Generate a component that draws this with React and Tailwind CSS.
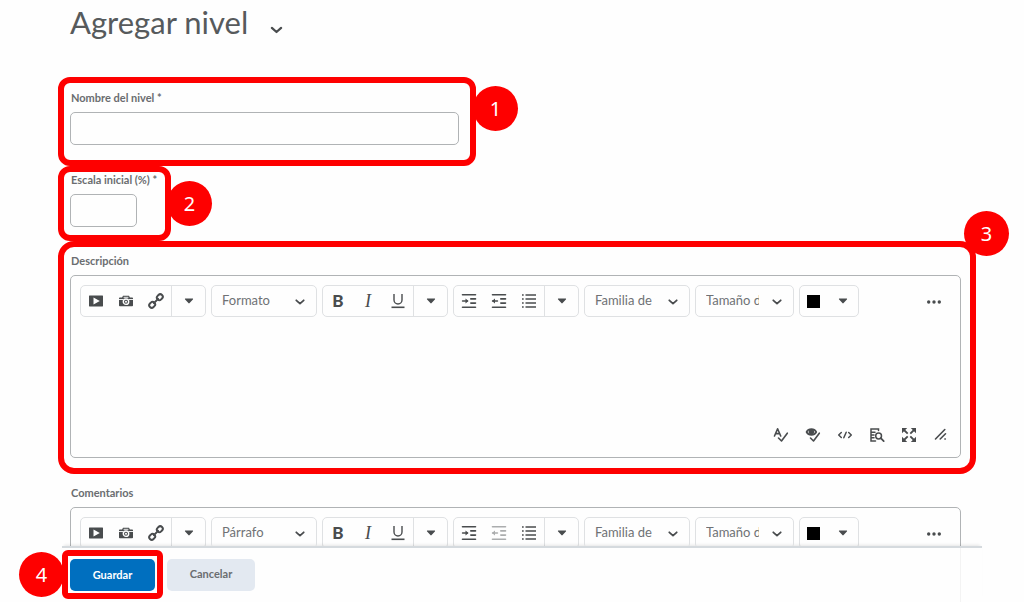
import React, { useState } from "react";

const CHROME = "border-[#dfe1e3]";

// --- Icons ---

function ChevronIcon({ className = "" }) {
  return (
    <svg className={className} width="12" height="8" viewBox="0 0 12 8" fill="none" stroke="currentColor" strokeWidth="1.8" strokeLinecap="round" strokeLinejoin="round" aria-hidden="true">
      <path d="M2.3 2.3L6 5.6l3.700-3.300" />
    </svg>
  );
}

function CaretIcon() {
  return (
    <svg width="10" height="6" viewBox="0 0 10 6" fill="currentColor" aria-hidden="true">
      <path d="M1.6 0.4h6.8c.7 0 .9.6.5 1L5.6 5.1c-.4.4-.8.4-1.2 0L1.1 1.4c-.4-.4-.2-1 .5-1z" />
    </svg>
  );
}

function VideoIcon() {
  return (
    <svg width="16" height="16" viewBox="0 0 16 16" fill="currentColor" aria-hidden="true">
      <path fillRule="evenodd" d="M1.500 2.5h13c.3 0 .5.2.5.5v10c0 .3-.2.5-.5.5h-13c-.3 0-.5-.2-.5-.5V3c0-.3.2-.5.5-.5zM5.500 4.600v6.800L11.800 8z" />
    </svg>
  );
}

function CameraIcon() {
  return (
    <svg width="16" height="16" viewBox="0 0 16 16" aria-hidden="true">
      <path fill="currentColor" d="M5 2.8h6l.9 1.700h2.300c.5 0 .8.300.8.800v7.200c0 .5-.3.800-.8.800H1.800c-.5 0-.8-.3-.8-.8V5.300c0-.5.3-.8.8-.8h2.300z" />
      <path d="M1 6.500h4M11 6.500h4" stroke="#fefefe" strokeWidth="0.900" />
      <path d="M5.600 4.300h4.800" stroke="#fefefe" strokeWidth="0.900" />
      <circle cx="8" cy="8.700" r="2.700" fill="none" stroke="#fefefe" strokeWidth="1.400" />
      <circle cx="8" cy="8.700" r="1" fill="#fefefe" />
    </svg>
  );
}

function LinkIcon() {
  return (
    <svg width="16" height="16" viewBox="0 0 16 16" fill="none" stroke="currentColor" strokeLinecap="round" aria-hidden="true">
      <g transform="rotate(-45 8 8)" strokeWidth="2">
        <rect x="-0.500" y="5.500" width="6.200" height="5" rx="2.500" />
        <rect x="10.300" y="5.500" width="6.200" height="5" rx="2.500" />
        <path d="M5 8h6" />
      </g>
    </svg>
  );
}

function UnderlineIcon() {
  return (
    <svg width="16" height="16" viewBox="0 0 16 16" fill="none" stroke="currentColor" aria-hidden="true">
      <path d="M4 1v6a4 4 0 0 0 8 0V1" strokeWidth="1.400" />
      <path d="M1.500 14.300h13" strokeWidth="1.600" />
    </svg>
  );
}

function IndentIcon({ outdent = false }) {
  return (
    <svg width="16" height="16" viewBox="0 0 16 16" fill="none" stroke="currentColor" strokeWidth="1.600" strokeLinecap="round" aria-hidden="true">
      <path d="M1.500 1.800h13M1.500 14.200h13M9.800 5.900h4.700M9.800 10.100h4.700" />
      <path d="M1.500 8h5" strokeWidth="1.400" />
      <path d={outdent ? "M1 8l3-2.400v4.800z" : "M7.500 8l-3-2.400v4.800z"} fill="currentColor" stroke="none" />
    </svg>
  );
}

function ListIcon() {
  return (
    <svg width="16" height="16" viewBox="0 0 16 16" fill="none" stroke="currentColor" strokeWidth="1.500" aria-hidden="true">
      <path d="M4.500 2h10.500M4.500 6h10.500M4.500 10h10.500M4.500 14h10.500" />
      <path d="M1 2h1.700M1 6h1.700M1 10h1.700M1 14h1.700" />
    </svg>
  );
}

function MoreIcon() {
  return (
    <svg width="16" height="16" viewBox="0 0 16 16" fill="currentColor" aria-hidden="true">
      <circle cx="2.700" cy="9" r="1.700" />
      <circle cx="8" cy="9" r="1.700" />
      <circle cx="13.300" cy="9" r="1.700" />
    </svg>
  );
}

function SpellcheckIcon() {
  return (
    <svg width="16" height="16" viewBox="0 0 16 16" fill="none" stroke="currentColor" strokeWidth="1.600" strokeLinecap="round" strokeLinejoin="round" aria-hidden="true">
      <path d="M1.500 9L4.600 1.800L7.700 9M2.700 6.600h3.800" />
      <path d="M5.500 11l3 3L14.300 6.200" />
    </svg>
  );
}

function AccessibilityCheckIcon() {
  return (
    <svg width="16" height="16" viewBox="0 0 16 16" fill="none" stroke="currentColor" strokeWidth="1.600" strokeLinecap="round" strokeLinejoin="round" aria-hidden="true">
      <path d="M1.500 5C3.600 1.200 9.200 1.200 11.300 5C9.200 8.800 3.600 8.800 1.500 5z" />
      <circle cx="6.400" cy="4.800" r="2" fill="currentColor" />
      <path d="M5.500 11l3 3L14.300 6.200" />
    </svg>
  );
}

function SourceIcon() {
  return (
    <svg width="16" height="16" viewBox="0 0 16 16" fill="none" stroke="currentColor" strokeWidth="1.500" strokeLinecap="round" strokeLinejoin="round" aria-hidden="true">
      <path d="M4.300 5.500L1.700 8l2.600 2.500M11.700 5.500L14.300 8l-2.600 2.500M9.200 5.300L6.800 10.700" />
    </svg>
  );
}

function PreviewIcon() {
  return (
    <svg width="16" height="16" viewBox="0 0 16 16" fill="none" stroke="currentColor" strokeWidth="1.500" strokeLinecap="round" aria-hidden="true">
      <path d="M9.500 3.500V2H2v12h4.500M2 5.300h4M2 8h3M2 10.800h3" />
      <circle cx="9.600" cy="9" r="2.900" />
      <path d="M11.800 11.200l2.900 2.900" strokeWidth="1.800" />
    </svg>
  );
}

function FullscreenIcon() {
  return (
    <svg width="16" height="16" viewBox="0 0 16 16" fill="currentColor" stroke="currentColor" aria-hidden="true">
      <path stroke="none" d="M1 1h5.200L1 6.200zM15 1v5.200L9.800 1zM1 15V9.800L6.200 15zM15 15H9.800L15 9.800z" />
      <path d="M3 3l3.700 3.700M13 3L9.300 6.700M3 13l3.700-3.700M13 13L9.300 9.300" strokeWidth="1.800" />
    </svg>
  );
}

function ResizeIcon() {
  return (
    <svg width="16" height="16" viewBox="0 0 16 16" fill="none" stroke="currentColor" strokeWidth="1.600" strokeLinecap="round" aria-hidden="true">
      <path d="M2.500 12L11.800 2.500M7.200 12L12.500 6.800M11.900 12h.4" />
    </svg>
  );
}

// --- Callouts ---

function Badge({ number, className }) {
  return (
    <span className={`absolute flex h-[45px] w-[45px] items-center justify-center rounded-full bg-[#fe0000] font-['Noto_Sans',sans-serif] text-xl text-white ${className}`}>
      {number}
    </span>
  );
}

function Callout({ number, badgeClass, className, children }) {
  return (
    <div className={`relative border-[6px] border-[#fe0000] ${className}`}>
      {children}
      <Badge number={number} className={badgeClass} />
    </div>
  );
}

// --- Form parts ---

function Label({ htmlFor, children }) {
  return (
    <label htmlFor={htmlFor} className="mb-1.5 block pl-px text-[11px] leading-4 font-bold text-[#6a6d70]">
      {children}
    </label>
  );
}

function TextField({ id, className }) {
  return (
    <input
      id={id}
      type="text"
      required
      className={`block h-[33px] rounded-[5px] border border-[#b0b3b5] px-3 text-sm ${className}`}
    />
  );
}

function ToolButton({ label, disabled, className = "w-[30px]", children }) {
  return (
    <button
      type="button"
      aria-label={label}
      disabled={disabled}
      className={`flex h-full items-center justify-center disabled:opacity-45 ${className}`}
    >
      {children}
    </button>
  );
}

function ToolGroup({ more, children }) {
  return (
    <div className={`flex h-8 shrink-0 rounded-[5px] border ${CHROME}`}>
      {children}
      <ToolButton label={more} className={`w-[34px] border-l ${CHROME}`}>
        <CaretIcon />
      </ToolButton>
    </div>
  );
}

function ToolSelect({ label, value, className }) {
  return (
    <div className={`relative h-8 shrink-0 ${className}`}>
      <select
        aria-label={label}
        className={`h-full w-full appearance-none rounded-[5px] border ${CHROME} pr-[34px] pl-2.5 text-[13px] text-[#6f7275]`}
      >
        <option>{value}</option>
      </select>
      <ChevronIcon className="pointer-events-none absolute top-[13px] right-[11px]" />
    </div>
  );
}

function Editor({ id, format, outdentDisabled }) {
  const [text, setText] = useState("");

  return (
    <div className="rounded-[5px] border border-[#b0b3b5] text-[#494c4e]">
      <div className="flex gap-[5px] px-[9px] pt-[9px]">
        <ToolGroup more="Más opciones de inserción">
          <ToolButton label="Insertar video"><VideoIcon /></ToolButton>
          <ToolButton label="Insertar imagen"><CameraIcon /></ToolButton>
          <ToolButton label="Insertar enlace"><LinkIcon /></ToolButton>
        </ToolGroup>
        <ToolSelect label="Formato" value={format} className="w-[106px]" />
        <ToolGroup more="Más opciones de texto">
          <ToolButton label="Negrita">
            <span className="text-[17px] font-black">B</span>
          </ToolButton>
          <ToolButton label="Cursiva">
            <span className="font-['Liberation_Serif',serif] text-lg italic">I</span>
          </ToolButton>
          <ToolButton label="Subrayado"><UnderlineIcon /></ToolButton>
        </ToolGroup>
        <ToolGroup more="Más opciones de lista">
          <ToolButton label="Aumentar sangría"><IndentIcon /></ToolButton>
          <ToolButton label="Reducir sangría" disabled={outdentDisabled}><IndentIcon outdent /></ToolButton>
          <ToolButton label="Lista"><ListIcon /></ToolButton>
        </ToolGroup>
        <ToolSelect label="Familia de fuente" value="Familia de fuente" className="w-[106px]" />
        <ToolSelect label="Tamaño de fuente" value="Tamaño de fuente" className="w-[99px]" />
        <button
          type="button"
          aria-label="Color de texto"
          className={`flex h-8 w-[60px] shrink-0 items-center justify-between rounded-[5px] border ${CHROME} pr-2.5 pl-[7px]`}
        >
          <span className="h-[13px] w-[13px] bg-black" />
          <CaretIcon />
        </button>
        <div className="ml-auto h-8 pr-px">
          <ToolButton label="Más acciones" className="w-8"><MoreIcon /></ToolButton>
        </div>
      </div>

      <textarea
        id={id}
        value={text}
        onChange={(e) => setText(e.target.value)}
        className="block h-[102px] w-full resize-none px-4 py-2 text-sm outline-none"
      />

      <div className="mb-1.5 flex h-8 justify-end pr-[3px]">
        <ToolButton label="Revisar ortografía" className="w-8"><SpellcheckIcon /></ToolButton>
        <ToolButton label="Comprobar accesibilidad" className="w-8"><AccessibilityCheckIcon /></ToolButton>
        <ToolButton label="Código fuente" className="w-8"><SourceIcon /></ToolButton>
        <ToolButton label="Vista previa" className="w-8"><PreviewIcon /></ToolButton>
        <ToolButton label="Pantalla completa" className="w-8"><FullscreenIcon /></ToolButton>
        <ToolButton label="Cambiar tamaño" className="w-8"><ResizeIcon /></ToolButton>
      </div>
    </div>
  );
}

export default function App() {
  return (
    <form
      onSubmit={(e) => e.preventDefault()}
      className="flex h-screen flex-col bg-[#fefefe] font-['Lato',sans-serif] text-[#494c4e]"
    >
      <main className="min-h-0 flex-1 overflow-hidden pr-12 pl-[58px]">
        <header className="flex h-[77px] items-start gap-5 pt-1 pl-3">
          <h1 className="text-[31px] leading-9 text-[#565a5c]">Agregar nivel</h1>
          <button type="button" aria-label="Cambiar de nivel" className="flex h-9 w-4 items-center justify-center pt-4">
            <ChevronIcon className="h-[10px] w-[15px]" />
          </button>
        </header>

        <Callout number="1" badgeClass="top-[3px] -right-12" className="w-[418px] rounded-xl pt-[7px] pr-[11px] pb-[15px] pl-1.5">
          <Label htmlFor="nombre">Nombre del nivel *</Label>
          <TextField id="nombre" className="w-full" />
        </Callout>

        <Callout number="2" badgeClass="top-[9px] -right-[47px]" className="w-[113px] rounded-xl pb-2 pl-1.5">
          <Label htmlFor="escala">Escala inicial (%) *</Label>
          <TextField id="escala" className="w-[67px]" />
        </Callout>

        <Callout number="3" badgeClass="-top-9 -right-[39px]" className="rounded-2xl pt-1.5 pr-[9px] pb-2.5 pl-1.5">
          <Label htmlFor="descripcion">Descripción</Label>
          <Editor id="descripcion" format="Formato" />
        </Callout>

        <div className="pt-[11px] pr-[15px] pl-3">
          <Label htmlFor="comentarios">Comentarios</Label>
          <Editor id="comentarios" format="Párrafo" outdentDisabled />
        </div>
      </main>

      <footer className="mr-[42px] ml-[62px] border-t-2 border-[#d5dade] shadow-[0_-3px_3px_-2px_rgba(0,0,0,0.1)]">
        <div className="mr-[21px] flex items-center gap-1 border-r border-[#f3f3f3] pt-0.5 pb-[3px]">
          <Callout number="4" badgeClass="-top-1 -left-[49px]" className="rounded-md px-0.5 pt-[3px] pb-0.5">
            <button type="submit" className="block h-8 w-[85px] rounded-[5px] bg-[#006fbf] text-[11px] font-bold text-white">
              Guardar
            </button>
          </Callout>
          <button type="button" className="h-8 w-[88px] rounded-[5px] bg-[#e3e9f1] text-[11px] font-bold text-[#6a6d70]">
            Cancelar
          </button>
        </div>
      </footer>
    </form>
  );
}
